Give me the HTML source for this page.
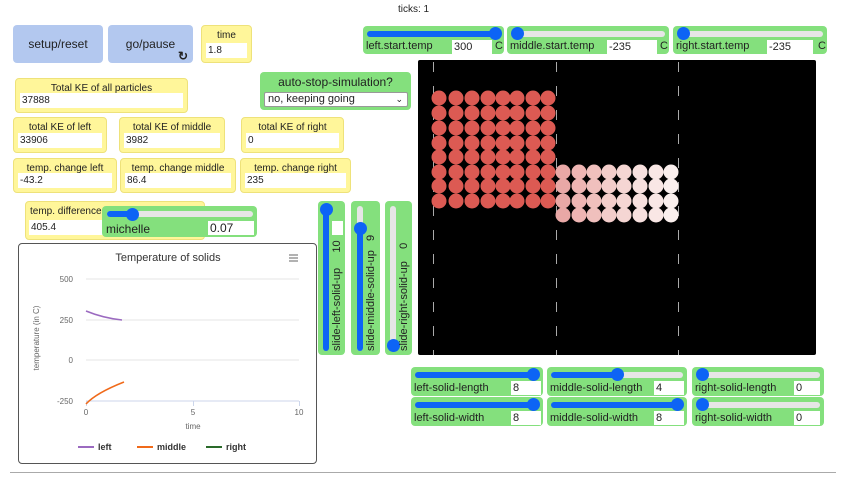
<!DOCTYPE html>
<html><head><style>
*{box-sizing:border-box;margin:0;padding:0}
body{width:842px;height:483px;background:#fff;font-family:"Liberation Sans",sans-serif;position:relative;overflow:hidden;color:#222}
.a{position:absolute}
.btn{background:#b3c8ef;border-radius:4px;font-size:12px;text-align:center;line-height:38px;color:#222}
.mon{background:#fff69a;border:1px solid #eee27a;border-radius:4px;font-size:10px;text-align:center}
.mon .v{position:absolute;left:4px;right:4px;bottom:4px;height:15px;background:#fff;text-align:left;padding-left:2px;line-height:15px;font-size:10px}
.mon .l{padding-top:4px}
.g{background:#84e07d;border-radius:4px}
.tr{position:absolute;height:6px;background:#e6e6e6;border-radius:3px}
.fl{position:absolute;height:6px;background:#0d64f5;border-radius:3px}
.kn{position:absolute;width:13px;height:13px;border-radius:50%;background:#0d64f5}
.sl{font-size:11px}
.inp{position:absolute;background:#fff;height:14px;font-size:11px;line-height:14px;padding-left:2px}
</style></head><body>
<div class="a" style="left:398px;top:4px;font-size:10px">ticks: 1</div>

<div class="a btn" style="left:13px;top:25px;width:90px;height:38px">setup/reset</div>
<div class="a btn" style="left:108px;top:25px;width:85px;height:38px">go/pause<span class="a" style="right:5px;bottom:-12px;font-size:12px;font-weight:bold">&#x21bb;</span></div>
<div class="a mon" style="left:201px;top:25px;width:51px;height:38px"><div class="l">time</div><div class="v">1.8</div></div>

<div class="a mon" style="left:15px;top:78px;width:173px;height:35px"><div class="l">Total KE of all particles</div><div class="v">37888</div></div>
<div class="a mon" style="left:13px;top:117px;width:94px;height:36px"><div class="l">total KE of left</div><div class="v">33906</div></div>
<div class="a mon" style="left:119px;top:117px;width:106px;height:36px"><div class="l">total KE of middle</div><div class="v">3982</div></div>
<div class="a mon" style="left:241px;top:117px;width:103px;height:36px"><div class="l">total KE of right</div><div class="v">0</div></div>
<div class="a mon" style="left:13px;top:158px;width:104px;height:35px"><div class="l">temp. change left</div><div class="v">-43.2</div></div>
<div class="a mon" style="left:120px;top:158px;width:116px;height:35px"><div class="l">temp. change middle</div><div class="v">86.4</div></div>
<div class="a mon" style="left:240px;top:158px;width:111px;height:35px"><div class="l">temp. change right</div><div class="v">235</div></div>
<div class="a mon" style="left:25px;top:201px;width:180px;height:39px;text-align:left"><div class="l" style="padding-left:4px">temp. difference</div><div class="v" style="left:3px;width:80px">405.4</div></div>
<div class="a g" style="left:102px;top:206px;width:155px;height:31px">
 <div class="tr" style="left:5px;top:5px;width:146px"></div><div class="fl" style="left:5px;top:5px;width:25px"></div><div class="kn" style="left:24px;top:2px"></div>
 <div class="a sl" style="left:4px;top:16px;font-size:12px">michelle</div><div class="inp" style="left:106px;top:15px;width:46px;font-size:12px">0.07</div>
</div>

<div class="a g" style="left:260px;top:72px;width:151px;height:38px">
 <div style="text-align:center;font-size:12px;padding-top:3px">auto-stop-simulation?</div>
 <div class="a" style="left:4px;top:20px;width:144px;height:15px;background:#fff;border:1px solid #999;border-radius:2px;font-size:11px;line-height:13px;padding-left:3px">no, keeping going<span style="position:absolute;right:4px;font-size:9px">&#8964;</span></div>
</div>

<div class="a g" style="left:363px;top:26px;width:141px;height:28px">
 <div class="fl" style="left:4px;top:5px;width:134px"></div><div class="kn" style="left:126px;top:1px"></div>
 <div class="a sl" style="left:3px;top:14px">left.start.temp</div><div class="inp" style="left:89px;top:14px;width:40px">300</div><div class="a sl" style="left:132px;top:14px">C</div>
</div>
<div class="a g" style="left:507px;top:26px;width:162px;height:28px">
 <div class="tr" style="left:4px;top:5px;width:154px"></div><div class="kn" style="left:4px;top:1px"></div>
 <div class="a sl" style="left:3px;top:14px">middle.start.temp</div><div class="inp" style="left:100px;top:14px;width:50px">-235</div><div class="a sl" style="left:153px;top:14px">C</div>
</div>
<div class="a g" style="left:673px;top:26px;width:154px;height:28px">
 <div class="tr" style="left:4px;top:5px;width:146px"></div><div class="kn" style="left:4px;top:1px"></div>
 <div class="a sl" style="left:3px;top:14px">right.start.temp</div><div class="inp" style="left:94px;top:14px;width:46px">-235</div><div class="a sl" style="left:145px;top:14px">C</div>
</div>

<svg class="a" style="left:418px;top:60px" width="398" height="295">
<rect width="398" height="295" rx="2" fill="#000"/>
<g stroke="#aaa" stroke-width="1" stroke-dasharray="10,14"><line x1="15.5" y1="2" x2="15.5" y2="295"/><line x1="138.5" y1="2" x2="138.5" y2="295"/><line x1="260.5" y1="2" x2="260.5" y2="295"/></g>
<g id="p"></g>
</svg>
<script>
var g=document.getElementById('p'),s='';
var lx=[21,38,54,70,85,99,115,130],ly=[38,53,68,83,97,112,126,141];
for(var i=0;i<8;i++)for(var j=0;j<8;j++)s+='<circle cx="'+lx[j]+'" cy="'+ly[i]+'" r="7.5" fill="#dc5a53"/>';
var mx=[145,161,176,191,206,222,238,253],my=[112,126,141,155];
var cols=['#e9a8a6','#eeb5b3','#f0c0bd','#f3cdca','#f5d6d3','#f7e0de','#f9e7e5','#faefed'];
for(var i=0;i<4;i++)for(var j=0;j<8;j++)s+='<circle cx="'+mx[j]+'" cy="'+my[i]+'" r="7.5" fill="'+cols[j]+'"/>';
g.innerHTML=s;
</script>

<div class="a g" style="left:318px;top:201px;width:27px;height:154px">
 <div class="fl" style="left:5px;top:5px;width:6px;height:145px"></div><div class="kn" style="left:2px;top:2px"></div>
 <div class="a" style="left:14px;top:20px;width:11px;height:14px;background:#fff"></div>
 <div class="a sl" style="left:13px;top:150px;transform:rotate(-90deg);transform-origin:0 0;white-space:nowrap">slide-left-solid-up&nbsp;&nbsp;&nbsp;&nbsp;&nbsp;10</div>
</div>
<div class="a g" style="left:351px;top:201px;width:29px;height:154px">
 <div class="tr" style="left:6px;top:5px;width:6px;height:145px"></div><div class="fl" style="left:6px;top:22px;width:6px;height:128px"></div><div class="kn" style="left:3px;top:21px"></div>
 <div class="a sl" style="left:14px;top:150px;transform:rotate(-90deg);transform-origin:0 0;white-space:nowrap">slide-middle-solid-up&nbsp;&nbsp;&nbsp;9</div>
</div>
<div class="a g" style="left:385px;top:201px;width:27px;height:154px">
 <div class="tr" style="left:5px;top:5px;width:6px;height:145px"></div><div class="kn" style="left:2px;top:138px"></div>
 <div class="a sl" style="left:13px;top:150px;transform:rotate(-90deg);transform-origin:0 0;white-space:nowrap">slide-right-solid-up&nbsp;&nbsp;&nbsp;&nbsp;0</div>
</div>

<div class="a" style="left:18px;top:243px;width:299px;height:221px;border:1px solid #555;border-radius:4px;background:#fff"></div>
<svg class="a" style="left:18px;top:243px" width="299" height="221" font-family="Liberation Sans, sans-serif">
<text x="150" y="18" text-anchor="middle" font-size="11" fill="#333">Temperature of solids</text>
<g stroke="#666" stroke-width="1"><line x1="271" y1="12" x2="280" y2="12"/><line x1="271" y1="15" x2="280" y2="15"/><line x1="271" y1="18" x2="280" y2="18"/></g>
<g stroke="#e6e6e6"><line x1="68" y1="36" x2="281" y2="36"/><line x1="68" y1="77" x2="281" y2="77"/><line x1="68" y1="117" x2="281" y2="117"/></g>
<line x1="68" y1="158" x2="281" y2="158" stroke="#ccd6eb"/>
<g stroke="#ccd6eb"><line x1="68.5" y1="158" x2="68.5" y2="163"/><line x1="175.5" y1="158" x2="175.5" y2="163"/><line x1="281.5" y1="158" x2="281.5" y2="163"/></g>
<g font-size="8" fill="#666" text-anchor="end"><text x="55" y="39">500</text><text x="55" y="80">250</text><text x="55" y="120">0</text><text x="55" y="161">-250</text></g>
<g font-size="8" fill="#666" text-anchor="middle"><text x="68" y="172">0</text><text x="175" y="172">5</text><text x="281" y="172">10</text><text x="175" y="186">time</text></g>
<text transform="translate(21,95) rotate(-90)" text-anchor="middle" font-size="8" fill="#666">temperature (in C)</text>
<path d="M68 68 Q85 75 104 77" stroke="#9b6ac0" stroke-width="1.5" fill="none"/>
<path d="M68 161 Q78 150 106 139" stroke="#f06a1a" stroke-width="1.5" fill="none"/>
<g font-size="9" font-weight="bold" fill="#333">
<line x1="60" y1="204" x2="76" y2="204" stroke="#9b6ac0" stroke-width="2"/><text x="80" y="207">left</text>
<line x1="119" y1="204" x2="135" y2="204" stroke="#f06a1a" stroke-width="2"/><text x="139" y="207">middle</text>
<line x1="188" y1="204" x2="204" y2="204" stroke="#2a6a2a" stroke-width="2"/><text x="208" y="207">right</text></g>
</svg>

<div class="a g" style="left:411px;top:367px;width:132px;height:29px">
 <div class="fl" style="left:4px;top:5px;width:124px"></div><div class="kn" style="left:116px;top:1px"></div>
 <div class="a sl" style="left:3px;top:15px">left-solid-length</div><div class="inp" style="left:100px;top:14px;width:30px">8</div>
</div>
<div class="a g" style="left:547px;top:367px;width:140px;height:29px">
 <div class="tr" style="left:4px;top:5px;width:132px"></div><div class="fl" style="left:4px;top:5px;width:66px"></div><div class="kn" style="left:64px;top:1px"></div>
 <div class="a sl" style="left:3px;top:15px">middle-solid-length</div><div class="inp" style="left:107px;top:14px;width:30px">4</div>
</div>
<div class="a g" style="left:692px;top:367px;width:132px;height:29px">
 <div class="tr" style="left:4px;top:5px;width:124px"></div><div class="kn" style="left:4px;top:1px"></div>
 <div class="a sl" style="left:3px;top:15px">right-solid-length</div><div class="inp" style="left:102px;top:14px;width:26px">0</div>
</div>
<div class="a g" style="left:411px;top:397px;width:132px;height:29px">
 <div class="fl" style="left:4px;top:5px;width:124px"></div><div class="kn" style="left:116px;top:1px"></div>
 <div class="a sl" style="left:3px;top:15px">left-solid-width</div><div class="inp" style="left:100px;top:14px;width:30px">8</div>
</div>
<div class="a g" style="left:547px;top:397px;width:140px;height:29px">
 <div class="fl" style="left:4px;top:5px;width:132px"></div><div class="kn" style="left:124px;top:1px"></div>
 <div class="a sl" style="left:3px;top:15px">middle-solid-width</div><div class="inp" style="left:107px;top:14px;width:30px">8</div>
</div>
<div class="a g" style="left:692px;top:397px;width:132px;height:29px">
 <div class="tr" style="left:4px;top:5px;width:124px"></div><div class="kn" style="left:4px;top:1px"></div>
 <div class="a sl" style="left:3px;top:15px">right-solid-width</div><div class="inp" style="left:102px;top:14px;width:26px">0</div>
</div>

<div class="a" style="left:10px;top:472px;width:826px;height:1px;background:#aaa"></div>
</body></html>
